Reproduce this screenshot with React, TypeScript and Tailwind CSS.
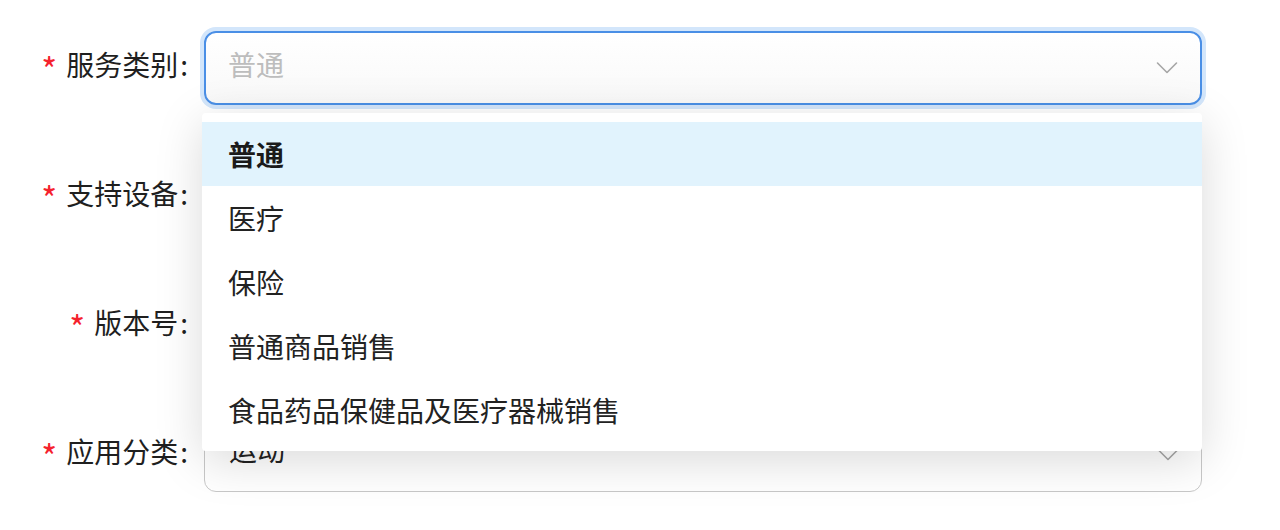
import React from 'react';

const font = { fontFamily: '"Noto Sans CJK SC", "Noto Sans", sans-serif' };

const Chevron: React.FC = () => (
    <svg width="22" height="14" viewBox="0 0 22 14" fill="none" className="shrink-0">
        <path d="M1.5 2 L11 11.5 L20.5 2" stroke="#a6a6a6" strokeWidth="1.6" strokeLinecap="round" strokeLinejoin="round" />
    </svg>
);

const Label: React.FC<{ text: string }> = ({ text }) => (
    <div className="w-[190px] shrink-0 flex justify-end items-center pr-[2px] -mt-[9px] text-[28px] text-[#1f1f1f]">
        <span className="text-[#f5222d] mr-[9px] text-[34px] leading-none mt-[10px]">*</span>
        <span>{text}</span>
        <span className="ml-[2px]">:</span>
    </div>
);

const options = ['普通', '医疗', '保险', '普通商品销售', '食品药品保健品及医疗器械销售'];

const App: React.FC = () => {
    return (
        <div className="w-[1280px] h-[530px] bg-white overflow-hidden pt-[31px]" style={font}>
            <div className="flex flex-col gap-[55px]">
                <div className="flex items-center">
                    <Label text="服务类别" />
                    <div className="relative ml-[14px] w-[998px]">
                        <div className="h-[74px] rounded-[12px] border-2 border-[#4a8fe6] ring-[4px] ring-[#d3e6fb] bg-gradient-to-b from-white to-[#f9f9f9] flex items-center justify-between pl-[22px] pr-[22px]">
                            <span className="text-[28px] text-[#bdbdbd] -mt-[9px]">普通</span>
                            <Chevron />
                        </div>
                        <div className="absolute z-10 left-[-2px] right-0 top-[calc(100%+8px)] bg-white rounded-[4px] py-[9px] shadow-[0_10px_48px_rgba(0,0,0,0.15)]">
                            {options.map((o, i) => (
                                <div
                                    key={o}
                                    className={`h-[64px] flex items-center pl-[26px] text-[28px] ${i === 0 ? 'bg-[#e1f3fd] font-bold text-[#1a1a1a]' : 'text-[#222]'}`}
                                >
                                    {o}
                                </div>
                            ))}
                        </div>
                    </div>
                </div>

                <div className="flex items-center">
                    <Label text="支持设备" />
                    <div className="ml-[14px] w-[998px] h-[74px] rounded-[12px] border border-[#c8c8c8] bg-white" />
                </div>

                <div className="flex items-center">
                    <Label text="版本号" />
                    <div className="ml-[14px] w-[998px] h-[74px] rounded-[12px] border border-[#c8c8c8] bg-white" />
                </div>

                <div className="flex items-center">
                    <Label text="应用分类" />
                    <div className="ml-[14px] w-[998px] h-[74px] rounded-[12px] border border-[#c8c8c8] bg-white flex items-center justify-between pl-[24px] pr-[22px]">
                        <span className="text-[28px] text-[#222] -mt-[12px]">运动</span>
                        <Chevron />
                    </div>
                </div>
            </div>
        </div>
    );
};

export default App;
